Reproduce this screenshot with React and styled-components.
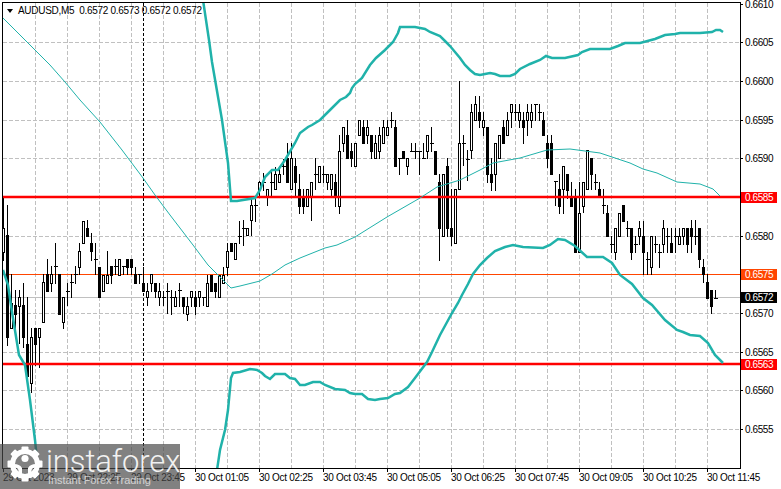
import * as React from 'react';
import styled, { createGlobalStyle } from 'styled-components';

const GlobalStyle = createGlobalStyle`
  html, body {
    margin: 0;
    padding: 0;
    background: #fff;
  }
`;

const Page = styled.div`
  position: relative;
  width: 781px;
  height: 489px;
  overflow: hidden;
  display: grid;
  grid-template-columns: 739px 40px;
  grid-template-rows: 467px 19px;
  padding: 2px 0 0 2px;
  box-sizing: border-box;
  font-family: "Liberation Sans", Arial, sans-serif;
  font-size: 10px;
  letter-spacing: -0.3px;
  color: #000;
`;

const PlotFrame = styled.div`
  position: relative;
  border: 1px solid #000;
  overflow: hidden;
`;

const Chart = styled.svg`
  display: block;
`;

const Legend = styled.div`
  position: absolute;
  left: 4px;
  top: 2px;
  display: flex;
  align-items: center;
  line-height: 12px;
  white-space: pre;
`;

const Arrow = styled.span`
  width: 0;
  height: 0;
  margin-right: 5px;
  border-left: 3.5px solid transparent;
  border-right: 3.5px solid transparent;
  border-top: 4px solid #000;
`;

const PriceAxis = styled.div`
  position: relative;
`;

const PriceTick = styled.span`
  position: absolute;
  left: -1px;
  width: 3px;
  height: 1px;
  background: #000;
`;

const PriceLabel = styled.span`
  position: absolute;
  left: 0;
  width: 36px;
  height: 11px;
  margin-top: -5.5px;
  padding-left: 4px;
  box-sizing: border-box;
  line-height: 11px;
  letter-spacing: -0.4px;
  color: ${p => (p.$bg ? '#fff' : '#000')};
  background: ${p => p.$bg || 'transparent'};
`;

const TimeAxis = styled.div`
  display: flex;
  grid-column: 1 / span 2;
  padding-left: 1px;
`;

const TimeCell = styled.div`
  position: relative;
  flex: 0 0 64px;
  padding-top: 3px;
  line-height: 12px;
  white-space: nowrap;
  &::before {
    content: '';
    position: absolute;
    left: 0;
    top: -1px;
    width: 1px;
    height: 4px;
    background: #000;
  }
`;

const Watermark = styled.div`
  position: absolute;
  left: 0;
  bottom: 0;
  width: 180px;
  height: 45px;
  display: flex;
  gap: 3px;
  padding: 2px 0 0 7px;
  box-sizing: border-box;
  background: rgba(72, 72, 72, 0.69);
  color: #fff;
  letter-spacing: 0;
`;

const BrandText = styled.div`
  display: flex;
  flex-direction: column;
`;

const BrandName = styled.div`
  padding-top: 2px;
  font-family: Roboto, "Liberation Sans", sans-serif;
  font-weight: 300;
  font-size: 31px;
  line-height: 28px;
  letter-spacing: -0.1px;
  opacity: 0.9;
`;

const BrandTag = styled.div`
  margin: -2px 0 0 2px;
  font-family: "Liberation Sans", Arial, sans-serif;
  font-size: 11px;
  line-height: 12px;
  letter-spacing: -0.05px;
  opacity: 0.65;
`;

const GearSvg = styled.svg`
  flex: none;
`;

// high, body top, body bottom, low, filled
const candles = [
  [197,228,252,260,0],[205,235,337,345,1],[274,303,328,328,0],[290,305,314,330,1],[290,297,306,343,0],
  [283,305,337,347,1],[297,344,376,376,1],[328,337,383,392,0],[328,328,344,365,1],[328,328,337,367,0],
  [274,282,322,322,0],[259,274,291,291,1],[266,274,283,291,0],[243,266,266,283,0],[274,274,314,314,1],
  [297,297,322,328,0],[283,291,291,305,0],[274,282,282,297,0],[266,274,274,283,0],[243,251,267,274,0],
  [221,221,243,243,0],[220,228,236,236,1],[233,243,251,260,1],[243,259,259,274,0],[267,267,297,297,1],
  [275,275,291,291,0],[251,275,283,283,0],[266,266,275,283,1],[259,266,266,274,0],[259,259,275,275,0],
  [266,266,266,274,0],[259,259,267,274,1],[259,259,267,274,1],[267,274,283,283,1],[274,274,274,283,0],
  [267,283,291,291,1],[283,291,297,305,0],[274,274,283,291,0],[283,283,291,297,1],[283,291,297,305,0],
  [291,297,297,305,0],[283,291,291,313,0],[290,297,297,314,0],[291,297,306,306,0],[283,290,290,306,0],
  [297,297,306,313,1],[297,306,314,320,0],[291,291,297,306,0],[291,297,306,314,1],[291,291,297,306,0],
  [297,297,297,305,0],[275,283,306,306,0],[275,275,291,291,1],[283,283,291,297,1],[275,275,297,297,0],
  [267,275,283,283,0],[243,251,267,275,0],[243,243,251,251,1],[243,243,259,259,0],[221,236,236,243,0],
  [220,228,228,245,0],[228,228,235,235,0],[197,205,220,235,0],[197,205,205,221,0],[181,182,190,197,0],
  [173,182,182,190,0],[189,189,197,205,0],[170,182,182,197,0],[167,174,189,189,0],[166,174,182,182,0],
  [159,166,166,174,0],[143,158,182,182,1],[143,158,189,189,0],[158,166,182,197,1],[174,189,206,213,1],
  [189,197,206,213,1],[189,189,206,206,0],[182,182,197,220,0],[158,174,174,189,0],[166,166,182,182,0],
  [166,174,174,182,0],[174,174,182,189,0],[174,174,189,197,0],[174,182,197,206,1],[135,151,206,213,0],
  [127,127,143,151,0],[120,135,158,158,1],[143,151,158,166,1],[143,143,166,166,0],[120,120,135,135,0],
  [120,127,143,143,1],[120,127,135,143,0],[135,135,151,158,1],[135,143,158,158,0],[127,135,151,158,0],
  [120,127,143,143,0],[120,127,135,135,0],[112,120,120,127,0],[120,127,166,166,1],[158,158,158,174,0],
  [151,151,158,158,1],[158,158,166,174,0],[143,151,151,151,0],[143,151,151,158,0],[151,151,151,174,0],
  [143,158,158,158,0],[135,135,151,158,0],[127,143,143,151,0],[151,151,174,174,1],[174,182,228,260,1],
  [174,174,236,236,0],[158,166,228,236,1],[189,228,236,245,1],[189,189,243,243,0],[81,143,189,189,0],
  [135,143,143,165,0],[150,159,159,180,0],[104,112,150,158,0],[96,104,120,120,0],[96,112,120,127,1],
  [112,120,127,135,0],[127,127,174,182,1],[158,174,182,190,1],[143,143,174,190,0],[135,135,158,158,0],
  [120,127,143,143,1],[112,120,135,135,0],[104,104,112,127,0],[104,112,112,120,0],[104,112,120,127,0],
  [112,120,127,143,1],[104,112,120,135,0],[104,112,120,127,0],[104,104,104,120,0],[104,112,112,120,0],
  [112,120,135,135,1],[135,143,158,167,1],[135,143,174,174,1],[181,181,181,205,0],[174,189,206,213,1],
  [166,166,189,213,0],[174,174,190,198,1],[182,197,206,206,1],[189,198,252,252,1],[182,213,252,252,0],
  [182,182,206,212,0],[150,150,189,189,0],[158,158,174,189,1],[174,182,182,189,0],[182,189,197,197,1],
  [189,205,205,213,0],[205,213,236,236,1],[236,244,244,252,0],[228,228,252,259,0],[213,213,236,236,0],
  [205,205,221,221,1],[221,228,228,236,0],[228,228,252,259,1],[236,244,244,252,0],[221,228,236,244,0],
  [221,236,252,274,1],[252,259,259,274,0],[236,236,267,274,0],[236,244,244,252,0],[244,252,252,267,0],
  [220,228,244,252,0],[228,236,236,252,0],[228,243,252,252,1],[228,236,236,252,0],[228,236,244,244,0],
  [228,228,236,244,0],[228,228,244,252,1],[220,228,236,252,1],[220,236,236,244,0],[228,228,259,267,1],
  [259,267,274,282,1],[274,282,298,298,1],[290,290,306,313,1],[290,298,298,298,0],
];

const upperBand = [
  [203,0],[209,40],[212,62],[222,120],[228,163],[231,201],[237,201],[255,198],[260,190],[265,177],
  [272,170],[278,170],[285,160],[295,143],[300,133],[308,127],[312,125],[320,120],[330,110],[340,100],
  [346,97],[350,93],[352,88],[355,84],[362,78],[370,65],[376,58],[385,50],[393,42],[398,33],[400,27],
  [405,27],[415,27],[425,29],[430,32],[440,36],[445,41],[450,46],[455,52],[460,58],[465,65],[470,70],
  [475,74],[480,75],[485,74],[490,73],[495,74],[500,76],[510,76],[515,74],[520,69],[530,64],[540,60],
  [546,56],[552,58],[565,58],[578,55],[582,52],[590,49],[610,49],[618,46],[625,43],[640,43],[655,39],
  [665,35],[675,34],[680,33],[700,33],[712,32],[716,30],[720,30],[723,32],
];

const lowerBandLeft = [[3,270],[8,285],[12,312],[19,355],[25,365],[30,400],[35,440],[38,470]];

const lowerBand = [
  [217,470],[220,450],[225,430],[228,410],[231,378],[233,373],[240,372],[250,369],[257,370],[262,373],
  [265,376],[270,379],[275,374],[285,374],[290,378],[295,379],[300,385],[305,385],[313,382],[320,382],
  [325,385],[335,389],[345,390],[350,393],[355,394],[362,394],[368,399],[375,400],[380,399],[388,398],
  [395,394],[400,393],[408,387],[415,378],[427,362],[432,352],[440,335],[452,313],[458,303],[462,295],
  [468,284],[473,274],[480,265],[487,258],[495,251],[505,247],[513,245],[523,247],[543,248],[550,245],
  [558,239],[565,240],[575,246],[587,257],[603,257],[612,263],[620,275],[632,284],[643,298],[652,305],
  [665,320],[677,330],[683,332],[690,335],[700,336],[708,343],[715,355],[723,363],
];

const middleBand = [
  [2,17],[10,25],[30,45],[50,65],[65,82],[80,100],[100,122],[122,150],[143,178],[155,195],[170,215],
  [193,245],[208,265],[215,272],[231,288],[240,286],[260,281],[272,274],[285,265],[300,258],[315,252],
  [325,248],[337,245],[355,237],[387,217],[420,198],[437,187],[460,180],[480,170],[493,163],[520,158],
  [547,150],[570,149],[600,153],[630,163],[643,169],[657,173],[677,182],[700,184],[713,189],[720,196],
];

const gridY = [42, 81, 120, 158, 197, 236, 274, 313, 352, 390, 429];
const gridX = Array.from({ length: 22 }, (_, i) => 35 + i * 32);

const priceLabels = [
  ['0.6610', 4], ['0.6605', 42], ['0.6600', 81], ['0.6595', 120], ['0.6590', 158],
  ['0.6580', 236], ['0.6570', 313], ['0.6565', 352], ['0.6560', 390], ['0.6555', 429],
];

const markedPrices = [
  ['0.6585', 197, '#ff0000'], ['0.6575', 274.5, '#ff4500'], ['0.6572', 297.5, '#000'], ['0.6563', 364, '#ff0000'],
];

const timeLabels = [
  '29 Oct 2023', '29 Oct 22:25', '29 Oct 23:45', '30 Oct 01:05', '30 Oct 02:25', '30 Oct 03:45',
  '30 Oct 05:05', '30 Oct 06:25', '30 Oct 07:45', '30 Oct 09:05', '30 Oct 10:25', '30 Oct 11:45',
];

const toPoints = line => line.map(p => p.join(',')).join(' ');

const Candle = ({ index, data }) => {
  const [high, top, bottom, low, filled] = data;
  const x = 3.5 + index * 4;
  return (
    <g>
      <line x1={x} x2={x} y1={high} y2={low + 1} stroke="#000" />
      {top === bottom ? (
        <line x1={x - 2} x2={x + 2} y1={top + 0.5} y2={top + 0.5} stroke="#000" />
      ) : (
        <rect x={x - 1} y={top + 0.5} width={2} height={bottom - top} fill={filled ? '#000' : '#fff'} stroke="#000" />
      )}
    </g>
  );
};

const GearLogo = () => (
  <GearSvg width="36" height="36" viewBox="0 0 36 36">
    <g fill="#fff">
      {[0, 45, 90, 135, 180, 225, 270, 315].map(a => (
        <rect key={a} x="14.5" y="0.5" width="7" height="7" rx="1" transform={`rotate(${a} 18 18)`} />
      ))}
    </g>
    <circle cx="18" cy="18" r="12.5" fill="none" stroke="#fff" strokeWidth="5" />
    <circle cx="18" cy="12.5" r="3.6" fill="#fff" />
    <path d="M7 18c4 0 6 1 8 4v10h-3.500v-8c-1-1.800-2.500-2.500-4.500-2.500zM29 18c-4 0-6 1-8 4v10h3.500v-8c1-1.800 2.500-2.500 4.500-2.500z" fill="#fff" />
  </GearSvg>
);

export default function App() {
  return (
    <>
      <GlobalStyle />
      <Page>
        <PlotFrame>
          <Chart width="737" height="465" viewBox="3 3 737 465" shapeRendering="crispEdges">
            <g stroke="#c0c0c0" strokeDasharray="4 2">
              {gridY.map(y => <line key={y} x1="3" x2="740" y1={y + 0.5} y2={y + 0.5} />)}
              {gridX.map(x => <line key={x} x1={x + 0.5} x2={x + 0.5} y1="3" y2="468" />)}
            </g>
            <line x1="143.5" x2="143.5" y1="3" y2="468" stroke="#000" strokeDasharray="3 2" />
            <line x1="3" x2="740" y1="297.5" y2="297.5" stroke="#c0c0c0" />
            <line x1="3" x2="740" y1="274.5" y2="274.5" stroke="#ff4500" />
            <g>
              {candles.map((c, i) => <Candle key={i} index={i} data={c} />)}
            </g>
            <g stroke="#ff0000" strokeWidth="2.4" shapeRendering="auto">
              <line x1="3" x2="740" y1="197" y2="197" />
              <line x1="3" x2="740" y1="364" y2="364" />
            </g>
            <g fill="none" stroke="#20b2aa" shapeRendering="auto">
              <polyline points={toPoints(middleBand)} strokeWidth="1" />
              <polyline points={toPoints(upperBand)} strokeWidth="2.5" />
              <polyline points={toPoints(lowerBand)} strokeWidth="2.5" />
              <polyline points={toPoints(lowerBandLeft)} strokeWidth="2.5" />
            </g>
          </Chart>
          <Legend>
            <Arrow />
            AUDUSD,M5  0.6572 0.6573 0.6572 0.6572
          </Legend>
        </PlotFrame>
        <PriceAxis>
          {priceLabels.map(([text, y]) => (
            <React.Fragment key={text}>
              <PriceTick style={{ top: y - 2 }} />
              <PriceLabel style={{ top: y - 2 }}>{text}</PriceLabel>
            </React.Fragment>
          ))}
          {markedPrices.map(([text, y, bg]) => (
            <PriceLabel key={text} $bg={bg} style={{ top: y - 2 }}>{text}</PriceLabel>
          ))}
        </PriceAxis>
        <TimeAxis>
          {timeLabels.map(t => <TimeCell key={t}>{t}</TimeCell>)}
        </TimeAxis>
        <Watermark>
          <GearLogo />
          <BrandText>
            <BrandName>instaforex</BrandName>
            <BrandTag>Instant Forex Trading</BrandTag>
          </BrandText>
        </Watermark>
      </Page>
    </>
  );
}
